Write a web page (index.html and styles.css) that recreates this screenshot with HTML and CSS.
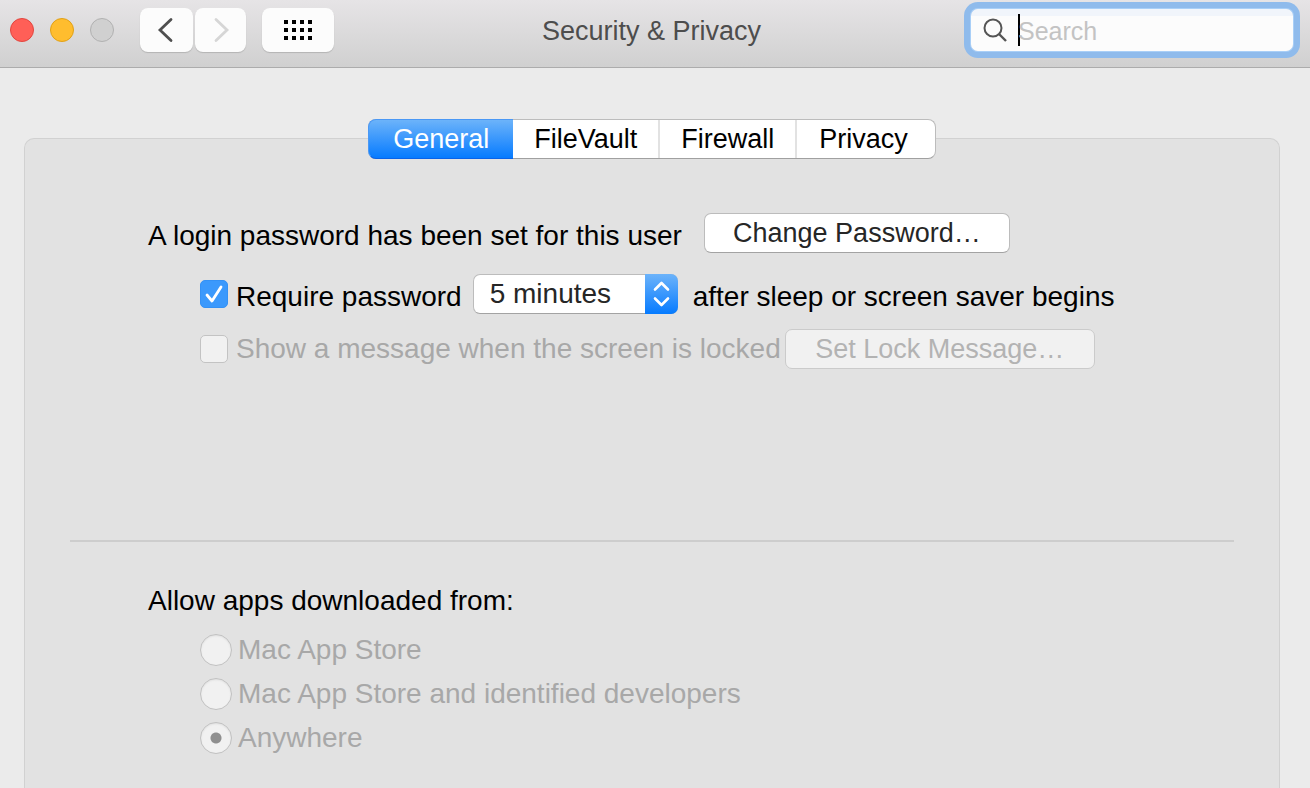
FILE: index.html
```html
<!DOCTYPE html>
<html lang="en">
<head>
<meta charset="utf-8">
<meta name="viewport" content="width=device-width, initial-scale=1">
<title>Security &amp; Privacy</title>
<link rel="stylesheet" href="styles.css">
</head>
<body>
<header class="toolbar">
  <div class="toolbar-start">
    <div class="lights">
      <button class="light light-close" type="button" aria-label="Close"></button>
      <button class="light light-minimize" type="button" aria-label="Minimize"></button>
      <button class="light light-zoom" type="button" aria-label="Zoom" disabled></button>
    </div>
    <nav class="history" aria-label="History">
      <button class="tool tool-back" type="button" aria-label="Back">
        <svg width="18" height="26" viewBox="0 0 18 26"><path d="M15 2.5 L4 13 L15 23.5" fill="none" stroke="#4f4f4f" stroke-width="2.8" stroke-linecap="round" stroke-linejoin="miter"/></svg>
      </button>
      <button class="tool tool-forward" type="button" aria-label="Forward" disabled>
        <svg width="18" height="26" viewBox="0 0 18 26"><path d="M4 2.5 L15 13 L4 23.5" fill="none" stroke="#d6d6d6" stroke-width="2.8" stroke-linecap="round" stroke-linejoin="miter"/></svg>
      </button>
    </nav>
    <button class="tool tool-grid" type="button" aria-label="Show All">
      <svg width="28" height="20" viewBox="0 0 28 20"><path d="M0 0h4v4H0zM8 0h4v4H8zM16 0h4v4h-4zM24 0h4v4h-4zM0 8h4v4H0zM8 8h4v4H8zM16 8h4v4h-4zM24 8h4v4h-4zM0 16h4v4H0zM8 16h4v4H8zM16 16h4v4h-4zM24 16h4v4h-4z"/></svg>
    </button>
  </div>
  <h1 class="title">Security &amp; Privacy</h1>
  <label class="search">
    <svg class="search-icon" width="24" height="24" viewBox="0 0 24 24"><g fill="none" stroke="#555" stroke-width="2"><circle cx="10" cy="10" r="8.5"/><path d="M16 16 L23 23" stroke-width="2.4"/></g></svg>
    <span class="caret"></span>
    <input class="search-input" type="text" placeholder="Search" aria-label="Search">
  </label>
</header>

<main class="content">
  <div class="tabs" role="tablist">
    <button class="tab tab-active" type="button" role="tab" aria-selected="true">General</button>
    <button class="tab" type="button" role="tab" aria-selected="false">FileVault</button>
    <button class="tab" type="button" role="tab" aria-selected="false">Firewall</button>
    <button class="tab" type="button" role="tab" aria-selected="false">Privacy</button>
  </div>
  <section class="panel" role="tabpanel">
    <div class="rows">
      <div class="row row-login">
        <span class="text">A login password has been set for this user</span>
        <button class="button button-change" type="button">Change Password…</button>
      </div>
      <div class="row row-require">
        <input class="check" type="checkbox" id="require" checked>
        <label class="text" for="require">Require password</label>
        <span class="popup">
          <select class="select" aria-label="Require password delay"><option>5 minutes</option></select>
          <svg class="popup-arrows" width="33" height="40" viewBox="0 0 33 40"><path d="M10 15.5 L16.5 9 L23 15.5 M10 24.5 L16.5 31 L23 24.5" fill="none" stroke="#fff" stroke-width="2.6" stroke-linecap="round" stroke-linejoin="round"/></svg>
        </span>
        <span class="text">after sleep or screen saver begins</span>
      </div>
      <div class="row row-message">
        <input class="check" type="checkbox" id="message" disabled>
        <label class="text text-disabled" for="message">Show a message when the screen is locked</label>
        <button class="button button-lock" type="button" disabled>Set Lock Message…</button>
      </div>
    </div>
    <hr class="divider">
    <fieldset class="sources">
      <legend class="legend">Allow apps downloaded from:</legend>
      <div class="option"><input class="radio" type="radio" name="source" id="store" disabled><label for="store">Mac App Store</label></div>
      <div class="option"><input class="radio" type="radio" name="source" id="developers" disabled><label for="developers">Mac App Store and identified developers</label></div>
      <div class="option"><input class="radio" type="radio" name="source" id="anywhere" checked disabled><label for="anywhere">Anywhere</label></div>
    </fieldset>
  </section>
</main>
</body>
</html>
```
FILE: styles.css
```css
* { box-sizing: border-box; }

body {
  margin: 0;
  min-height: 100vh;
  display: flex;
  flex-direction: column;
  background: #ebebeb;
  color: #000;
  font: 28px/32px "Liberation Sans", Arial, sans-serif;
}

button, input, select { font: inherit; }

.toolbar {
  display: grid;
  grid-template-columns: 1fr auto 1fr;
  align-items: start;
  height: 68px;
  padding: 8px 17px 0 10px;
  background: linear-gradient(#e6e4e6, #d0d0d0);
  border-bottom: 1px solid #acacac;
}

.toolbar-start { display: flex; align-items: center; }
.lights { display: flex; gap: 16px; margin-right: 26px; }

.light {
  width: 24px;
  height: 24px;
  padding: 0;
  border: 1px solid;
  border-radius: 50%;
}
.light-close { background: #ff5f57; border-color: #e2463f; }
.light-minimize { background: #ffbd2e; border-color: #e1a116; }
.light-zoom { background: #d0d0d0; border-color: #b1b1b1; }

.history { display: flex; gap: 2px; margin-right: 16px; }

.tool {
  display: flex;
  align-items: center;
  justify-content: center;
  height: 44px;
  padding: 0;
  border: 0;
  border-radius: 8px;
  background: #fcfcfc;
  box-shadow: 0 1px 1px #b4b4b4;
}
.tool-back { width: 53px; padding-right: 4px; }
.tool-forward { width: 51px; }
.tool-grid { width: 72px; }

.title {
  margin: 0;
  padding-top: 7px;
  font-size: 27px;
  font-weight: 400;
  color: #4d4d4d;
}

.search {
  display: flex;
  align-items: center;
  justify-self: end;
  width: 322px;
  height: 42px;
  margin-top: 1px;
  padding: 0 12px;
  border-radius: 7px;
  background: linear-gradient(#f1f5fb 7px, #fcfcfc 7px);
  box-shadow: 0 0 0 1px #a9cff7, 0 0 0 7px #8fbbec;
}
.search-icon { flex: none; margin-right: 11px; }
.caret { flex: none; width: 2px; height: 32px; margin-right: -2px; background: #000; }
.search-input {
  flex: 1;
  min-width: 0;
  padding: 2px 0 0;
  border: 0;
  outline: 0;
  background: transparent;
  font-size: 25px;
}
.search-input::placeholder { color: #c3c3c3; opacity: 1; }

.content {
  flex: 1;
  display: flex;
  flex-direction: column;
  align-items: center;
  padding: 51px 30px 0 24px;
}

.tabs {
  z-index: 1;
  display: flex;
  height: 40px;
  margin-bottom: -21px;
  border: 1px solid #bcbcbc;
  border-bottom-color: #a0a0a0;
  border-radius: 8px;
  background: #fff;
  font-size: 27px;
}
.tab {
  padding: 0 21px;
  border: 0;
  border-left: 2px solid #e2e2e2;
  background: transparent;
  color: #000;
}
.tab:last-child { padding: 0 27px 0 22px; }
.tab-active {
  margin: -1px 0 -1px -1px;
  padding: 0 24px;
  border: 1px solid #4a98f5;
  border-bottom-color: #0a63e8;
  border-right: 0;
  border-radius: 8px 0 0 8px;
  background: linear-gradient(#6cb3fa, #067bff);
  color: #fff;
}
.tab-active + .tab { border-left: 0; }

.panel {
  flex: 1;
  align-self: stretch;
  padding: 74px 45px 0;
  border: 1px solid #d1d1d1;
  border-bottom: 0;
  border-radius: 10px 10px 0 0;
  background: #e2e2e2;
}

.rows { padding-left: 78px; }
.row { display: flex; align-items: center; }
.text { padding-top: 6px; white-space: nowrap; }

.row-login { gap: 22px; }
.row-require { margin-top: 21px; padding-left: 52px; }
.row-message { margin-top: 15px; padding-left: 52px; }
.text-disabled { padding-top: 0; color: #a8a8a8; }

.button {
  height: 40px;
  padding: 0;
  border: 1px solid #bcbcbc;
  border-bottom-color: #a3a3a3;
  border-radius: 7px;
  background: #fff;
  color: #262626;
  font-size: 27px;
  white-space: nowrap;
}
.button:disabled {
  border-color: #cbcbcb;
  background: #f1f1f1;
  color: #b3b3b3;
}
.button-change { width: 306px; }
.button-lock { width: 310px; margin-left: 4px; }

.check {
  appearance: none;
  flex: none;
  width: 28px;
  height: 28px;
  margin: 0 8px 0 0;
  border: 1px solid #c3c3c3;
  border-radius: 5px;
  background: #f1f1f1;
}
.check:checked {
  border-color: #3491f5;
  background: #3b99fc url("data:image/svg+xml,%3Csvg xmlns='http://www.w3.org/2000/svg' viewBox='0 0 26 26'%3E%3Cpath d='M6 14 L11 20 L20 6' fill='none' stroke='white' stroke-width='2.8' stroke-linecap='round' stroke-linejoin='round'/%3E%3C/svg%3E");
}

.popup { position: relative; width: 205px; height: 40px; margin: 0 15px 0 11px; }
.select {
  appearance: none;
  width: 100%;
  height: 40px;
  padding: 0 40px 0 16px;
  border: 1px solid #bcbcbc;
  border-bottom-color: #a3a3a3;
  border-radius: 7px;
  background: #fff;
  color: #262626;
}
.popup-arrows {
  position: absolute;
  top: 0;
  right: 0;
  border-radius: 0 7px 7px 0;
  background: linear-gradient(#6cb3fa, #067bff);
  pointer-events: none;
}

.divider {
  height: 2px;
  margin: 171px 0 0;
  border: 0;
  background: #cdcdcd;
}

.sources {
  margin: 43px 0 0;
  padding: 0 0 0 130px;
  border: 0;
  color: #a8a8a8;
}
.legend { margin: 0 0 17px -52px; padding: 0; color: #000; }
.option { display: flex; align-items: center; gap: 6px; margin-bottom: 12px; }
.radio {
  appearance: none;
  width: 32px;
  height: 32px;
  margin: 0;
  border: 1px solid #c1c1c1;
  border-radius: 50%;
  background: #f1f1f1;
  box-shadow: inset 0 1px 2px #dedede;
}
.radio:checked { background: radial-gradient(circle, #8f8f8f 5px, #f1f1f1 6px); }
```
